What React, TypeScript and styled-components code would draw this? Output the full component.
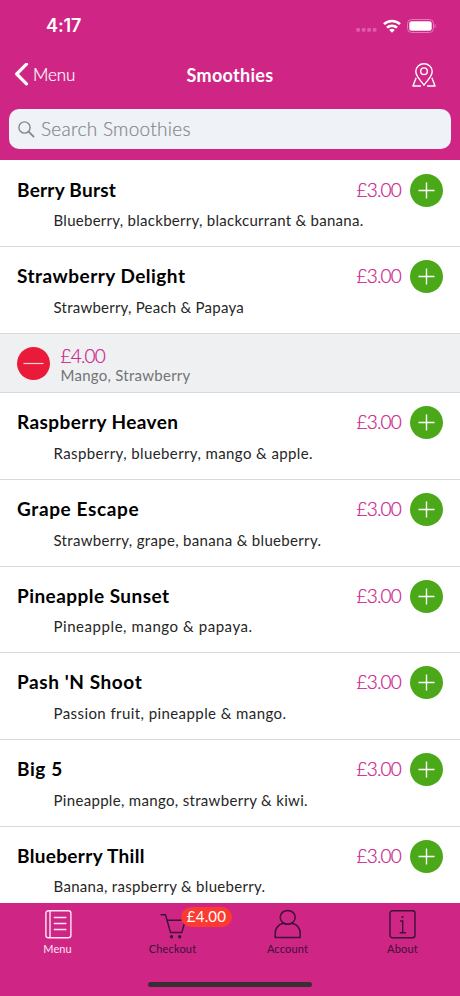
import React from 'react';
import styled, { createGlobalStyle } from 'styled-components';

const pink = '#cf2585';
const ink = '#3b1238';

const GlobalStyle = createGlobalStyle`
  * { box-sizing: border-box; }
  body { margin: 0; background: #fff; }
`;

const Screen = styled.div`
  width: 460px;
  height: 996px;
  display: flex;
  flex-direction: column;
  overflow: hidden;
  background: #fff;
  color: #000;
  font-family: Lato, "Noto Sans", sans-serif;
`;

const Header = styled.header`
  flex: none;
  height: 160px;
  background: ${pink};
  color: #fff;
`;

const StatusBar = styled.div`
  height: 50px;
  padding: 2px 24px 0 46px;
  display: flex;
  align-items: center;
  justify-content: space-between;
`;

const Clock = styled.span`
  font: 600 18px/24px Inter, Lato, sans-serif;
  letter-spacing: -0.1px;
`;

const StatusIcons = styled.div`
  display: flex;
  align-items: center;
  gap: 6px;
`;

const NavBar = styled.div`
  height: 50px;
  padding: 0 24px 0 14px;
  display: grid;
  grid-template-columns: 1fr auto 1fr;
  align-items: center;
`;

const BackButton = styled.div`
  display: flex;
  align-items: center;
  gap: 4px;
  font-size: 17px;
  line-height: 24px;
  font-weight: 300;
  letter-spacing: -0.1px;
  -webkit-text-stroke: 0.2px #fff;
`;

const NavTitle = styled.h1`
  margin: 0 0 0 10px;
  font-size: 18px;
  line-height: 24px;
  font-weight: 700;
  letter-spacing: 0.3px;
`;

const NavAction = styled.div`
  display: flex;
  justify-content: flex-end;
`;

const SearchField = styled.div`
  height: 40px;
  margin: 9px 9px 0;
  padding-left: 9px;
  display: flex;
  align-items: center;
  gap: 6px;
  border-radius: 10px;
  background: #eff3f7;
  color: #85878c;
  font-size: 19px;
  line-height: 24px;
  font-weight: 300;
  letter-spacing: 0.28px;
  -webkit-text-stroke: 0.2px #85878c;
`;

const List = styled.main`
  flex: 1;
  min-height: 0;
  padding-top: 0.67px;
  overflow: hidden;
`;

const Item = styled.section`
  height: 86.67px;
  padding: 12.5px 17px 0;
  border-bottom: 1px solid #dadadc;
`;

const ItemTop = styled.div`
  height: 34px;
  display: flex;
  align-items: center;
`;

const ItemName = styled.h2<{ $tracking: number }>`
  flex: 1;
  margin: -1px 0 0;
  font-size: 19px;
  line-height: 24px;
  font-weight: 700;
  white-space: nowrap;
  letter-spacing: ${({ $tracking }) => $tracking}px;
`;

const Price = styled.span`
  font-size: 19px;
  line-height: 22px;
  font-weight: 300;
  letter-spacing: -0.8px;
  color: #cb1a88;
  -webkit-text-stroke: 0.2px #cb1a88;
`;

const ItemPrice = styled(Price)`
  margin: -1px 9px 0 0;
`;

const Description = styled.p<{ $tracking: number }>`
  margin: 3.3px 0 0 36.5px;
  font-size: 15px;
  line-height: 20px;
  color: #262626;
  white-space: nowrap;
  letter-spacing: ${({ $tracking }) => $tracking}px;
`;

const RoundButton = styled.span<{ $color: string }>`
  flex: none;
  width: 33px;
  height: 33px;
  display: grid;
  place-items: center;
  border-radius: 50%;
  background: ${({ $color }) => $color};
`;

const OrderLine = styled.section`
  height: 59.3px;
  padding: 0 17px;
  display: flex;
  align-items: center;
  gap: 10.5px;
  background: #eff0f2;
  border-bottom: 1px solid #dadadc;
`;

const OrderText = styled.div`
  padding-top: 4.5px;
  display: flex;
  flex-direction: column;
`;

const OrderDetail = styled.span`
  margin-top: -1px;
  font-size: 15px;
  line-height: 19px;
  letter-spacing: 0.26px;
  color: #737477;
`;

const Footer = styled.footer`
  flex: none;
  height: 93px;
  background: ${pink};
  display: flex;
  flex-direction: column;
  align-items: center;
`;

const Tabs = styled.nav`
  width: 100%;
  height: 77.5px;
  display: grid;
  grid-template-columns: repeat(4, 1fr);
`;

const Tab = styled.div<{ $active?: boolean }>`
  position: relative;
  padding-top: 6px;
  display: flex;
  flex-direction: column;
  align-items: center;
  color: ${({ $active }) => ($active ? '#ffe6f5' : ink)};
`;

const TabLabel = styled.span<{ $tracking: number }>`
  margin-top: 2px;
  font-size: 11px;
  line-height: 15px;
  letter-spacing: ${({ $tracking }) => $tracking}px;
`;

const Badge = styled.span`
  position: absolute;
  top: 4px;
  left: 66px;
  width: 51px;
  height: 20px;
  border-radius: 10px;
  background: #fb3b31;
  color: #fff;
  font-size: 15px;
  line-height: 19px;
  letter-spacing: 0.2px;
  text-align: center;
`;

const HomeIndicator = styled.div`
  width: 164px;
  height: 5px;
  margin-top: 1px;
  border-radius: 3px;
  background: #372f33;
`;

const smoothies = [
  { name: 'Berry Burst', tracking: 0.25, detail: 'Blueberry, blackberry, blackcurrant & banana.', detailTracking: 0.28 },
  { name: 'Strawberry Delight', tracking: 0.48, detail: 'Strawberry, Peach & Papaya', detailTracking: 0.24, ordered: true },
  { name: 'Raspberry Heaven', tracking: 0.43, detail: 'Raspberry, blueberry, mango & apple.', detailTracking: 0.4 },
  { name: 'Grape Escape', tracking: 0.63, detail: 'Strawberry, grape, banana & blueberry.', detailTracking: 0.32 },
  { name: 'Pineapple Sunset', tracking: 0.45, detail: 'Pineapple, mango & papaya.', detailTracking: 0.56 },
  { name: "Pash 'N Shoot", tracking: 0.58, detail: 'Passion fruit, pineapple & mango.', detailTracking: 0.42 },
  { name: 'Big 5', tracking: 0.6, detail: 'Pineapple, mango, strawberry & kiwi.', detailTracking: 0.32 },
  { name: 'Blueberry Thill', tracking: 0.33, detail: 'Banana, raspberry & blueberry.', detailTracking: 0.3 },
];

const PlusIcon = () => (
  <svg width="17" height="17" viewBox="0 0 17 17" fill="none" stroke="#fff" strokeWidth="1.4">
    <path d="M8.5 .5v16M.5 8.5h16" />
  </svg>
);

const MinusIcon = () => (
  <svg width="21" height="3" viewBox="0 0 21 3" fill="none" stroke="#ffd0d8" strokeWidth="1.2">
    <path d="M.5 1.5h20" />
  </svg>
);

const StatusGlyphs = () => (
  <StatusIcons>
    <svg width="21" height="14" viewBox="0 0 21 14" fill="#e05aaa">
      <rect x="0.2" y="9" width="3.8" height="3.8" rx="1" />
      <rect x="5.7" y="9" width="3.8" height="3.8" rx="1" />
      <rect x="11.2" y="9" width="3.8" height="3.8" rx="1" />
      <rect x="16.7" y="9" width="3.8" height="3.8" rx="1" />
    </svg>
    <svg width="18" height="14" viewBox="0 0 18 14" fill="none" stroke="#fff" strokeWidth="2.5">
      <path d="M1 5.2a11.4 11.4 0 0 1 16 0M4 8.7a7.1 7.1 0 0 1 10 0" />
      <path d="M6.2 11.1a4 4 0 0 1 5.6 0L9 13.8z" fill="#fff" stroke="none" />
    </svg>
    <svg width="29" height="14" viewBox="0 0 29 14" fill="none">
      <rect x=".5" y=".5" width="26" height="13" rx="4" stroke="#e777b8" />
      <rect x="2.3" y="2.3" width="22.4" height="9.4" rx="2.3" fill="#fff" />
      <path d="M27.6 4.7c1.5.7 1.5 3.9 0 4.6z" fill="#e777b8" />
    </svg>
  </StatusIcons>
);

const BackIcon = () => (
  <svg width="15" height="24" viewBox="0 0 15 24" fill="none" stroke="#fff" strokeWidth="3.2" strokeLinecap="round" strokeLinejoin="round">
    <path d="M12.5 1.2 2.7 11l9.8 9.8" />
  </svg>
);

const MapPinIcon = () => (
  <svg width="24" height="25" viewBox="0 0 24 25" fill="none" stroke="#fff" strokeWidth="1.4" strokeLinejoin="round">
    <path d="M12 22.2C9.7 18.5 3.8 13.4 3.8 8.4a8.200 7.700 0 0 1 16.400 0c0 5-5.900 10.100-8.200 13.800z" />
    <circle cx="12" cy="8.200" r="3.300" />
    <path d="M4.100 14.800 1 23h8M19.900 14.800l3.100 8.200h-8" />
  </svg>
);

const SearchIcon = () => (
  <svg width="17" height="17" viewBox="0 0 17 17" fill="none" stroke="#85878c" strokeWidth="1.4" strokeLinecap="round">
    <circle cx="6.500" cy="6.500" r="5.600" />
    <path d="m10.600 10.600 5 5" strokeWidth="1.800" />
  </svg>
);

const MenuIcon = () => (
  <svg width="28" height="30" viewBox="0 0 28 30" fill="none" stroke="currentColor" strokeWidth="1.400">
    <rect x="1.900" y="1.700" width="25" height="27" rx="2.500" />
    <path d="M6 1.700v27M9.800 8.500h12.600M9.800 14.500h12.600M9.800 20.500h12.600" />
  </svg>
);

const CartIcon = () => (
  <svg width="28" height="30" viewBox="0 0 28 30" fill="none" stroke="currentColor" strokeWidth="1.400" strokeLinejoin="round">
    <path d="M1.500 5.700h5l5 17.800h11.300l3.500-12.300H8" />
    <circle cx="12.500" cy="27.700" r="1.700" fill="currentColor" stroke="none" />
    <circle cx="20.700" cy="27.700" r="1.700" fill="currentColor" stroke="none" />
  </svg>
);

const AccountIcon = () => (
  <svg width="28" height="30" viewBox="0 0 28 30" fill="none" stroke="currentColor" strokeWidth="1.500" strokeLinejoin="round">
    <ellipse cx="13.700" cy="8.300" rx="7.500" ry="6.900" />
    <path d="M9.400 14.200C4.200 15.500 1.200 19.500 1.200 24.500v4h25v-4c0-5-3-9-8.200-10.300 -2.800 1.500-5.800 1.500-8.600 0" />
  </svg>
);

const AboutIcon = () => (
  <svg width="28" height="30" viewBox="0 0 28 30" fill="none" stroke="currentColor" strokeWidth="1.400">
    <rect x="1" y="1.700" width="25" height="27" rx="2.500" />
    <path d="M11 12h2.700v11.700M10.700 23.700h6.200" />
    <circle cx="13.500" cy="8" r="1.100" fill="currentColor" stroke="none" />
  </svg>
);

const tabs = [
  { label: 'Menu', Icon: MenuIcon, active: true, tracking: 0.1 },
  { label: 'Checkout', Icon: CartIcon, badge: '£4.00', tracking: 0.18 },
  { label: 'Account', Icon: AccountIcon, tracking: 0.18 },
  { label: 'About', Icon: AboutIcon, tracking: 0.2 },
];

export default function App() {
  return (
    <Screen>
      <GlobalStyle />
      <Header>
        <StatusBar>
          <Clock>4:17</Clock>
          <StatusGlyphs />
        </StatusBar>
        <NavBar>
          <BackButton>
            <BackIcon />
            Menu
          </BackButton>
          <NavTitle>Smoothies</NavTitle>
          <NavAction>
            <MapPinIcon />
          </NavAction>
        </NavBar>
        <SearchField>
          <SearchIcon />
          Search Smoothies
        </SearchField>
      </Header>
      <List>
        {smoothies.map((s) => (
          <React.Fragment key={s.name}>
            <Item>
              <ItemTop>
                <ItemName $tracking={s.tracking}>{s.name}</ItemName>
                <ItemPrice>£3.00</ItemPrice>
                <RoundButton $color="#4ba819">
                  <PlusIcon />
                </RoundButton>
              </ItemTop>
              <Description $tracking={s.detailTracking}>{s.detail}</Description>
            </Item>
            {s.ordered && (
              <OrderLine>
                <RoundButton $color="#ea1a3a">
                  <MinusIcon />
                </RoundButton>
                <OrderText>
                  <Price>£4.00</Price>
                  <OrderDetail>Mango, Strawberry</OrderDetail>
                </OrderText>
              </OrderLine>
            )}
          </React.Fragment>
        ))}
      </List>
      <Footer>
        <Tabs>
          {tabs.map(({ label, Icon, active, badge, tracking }) => (
            <Tab key={label} $active={active}>
              <Icon />
              <TabLabel $tracking={tracking}>{label}</TabLabel>
              {badge && <Badge>{badge}</Badge>}
            </Tab>
          ))}
        </Tabs>
        <HomeIndicator />
      </Footer>
    </Screen>
  );
}
